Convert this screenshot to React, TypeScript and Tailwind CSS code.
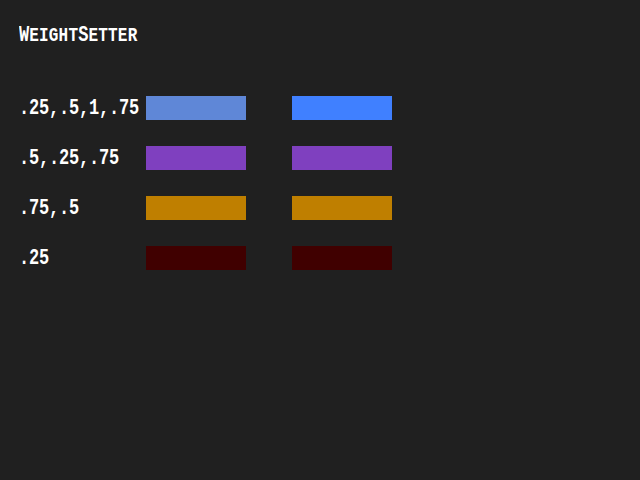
import React from 'react';

interface Row {
  label: string;
  left: string;
  right: string;
}

const rows: Row[] = [
  { label: '.25,.5,1,.75', left: 'bg-[#5f87d7]', right: 'bg-[#4080ff]' },
  { label: '.5,.25,.75', left: 'bg-[#7f40bf]', right: 'bg-[#7f40bf]' },
  { label: '.75,.5', left: 'bg-[#bf7f00]', right: 'bg-[#bf7f00]' },
  { label: '.25', left: 'bg-[#400000]', right: 'bg-[#400000]' },
];

export default function App() {
  return (
    <div className="w-[640px] h-[480px] bg-[#202020] text-white font-['Liberation_Mono',monospace] font-bold overflow-hidden">
      {/* title: pixel-font look, big initials */}
      <div className="pl-[19px] pt-[24px] h-[96px]">
        <h1 className="flex items-baseline leading-[18px] scale-y-[1.3] origin-top-left uppercase">
          <span className="text-[17px]">W</span>
          <span className="text-[16px] tracking-[0.2px]">eight</span>
          <span className="text-[17px]">S</span>
          <span className="text-[16px] tracking-[0.2px]">etter</span>
        </h1>
      </div>

      {/* weight rows */}
      <div className="flex flex-col gap-[26px] pl-[19px]">
        {rows.map((row) => (
          <div key={row.label} className="flex items-center h-[24px]">
            <span className="w-[127px] text-[17px] leading-[24px] scale-y-125 origin-left tracking-[-0.2px] translate-y-[1px]">
              {row.label}
            </span>
            <div className={`w-[100px] h-[24px] ${row.left}`} />
            <div className={`ml-[46px] w-[100px] h-[24px] ${row.right}`} />
          </div>
        ))}
      </div>
    </div>
  );
}
